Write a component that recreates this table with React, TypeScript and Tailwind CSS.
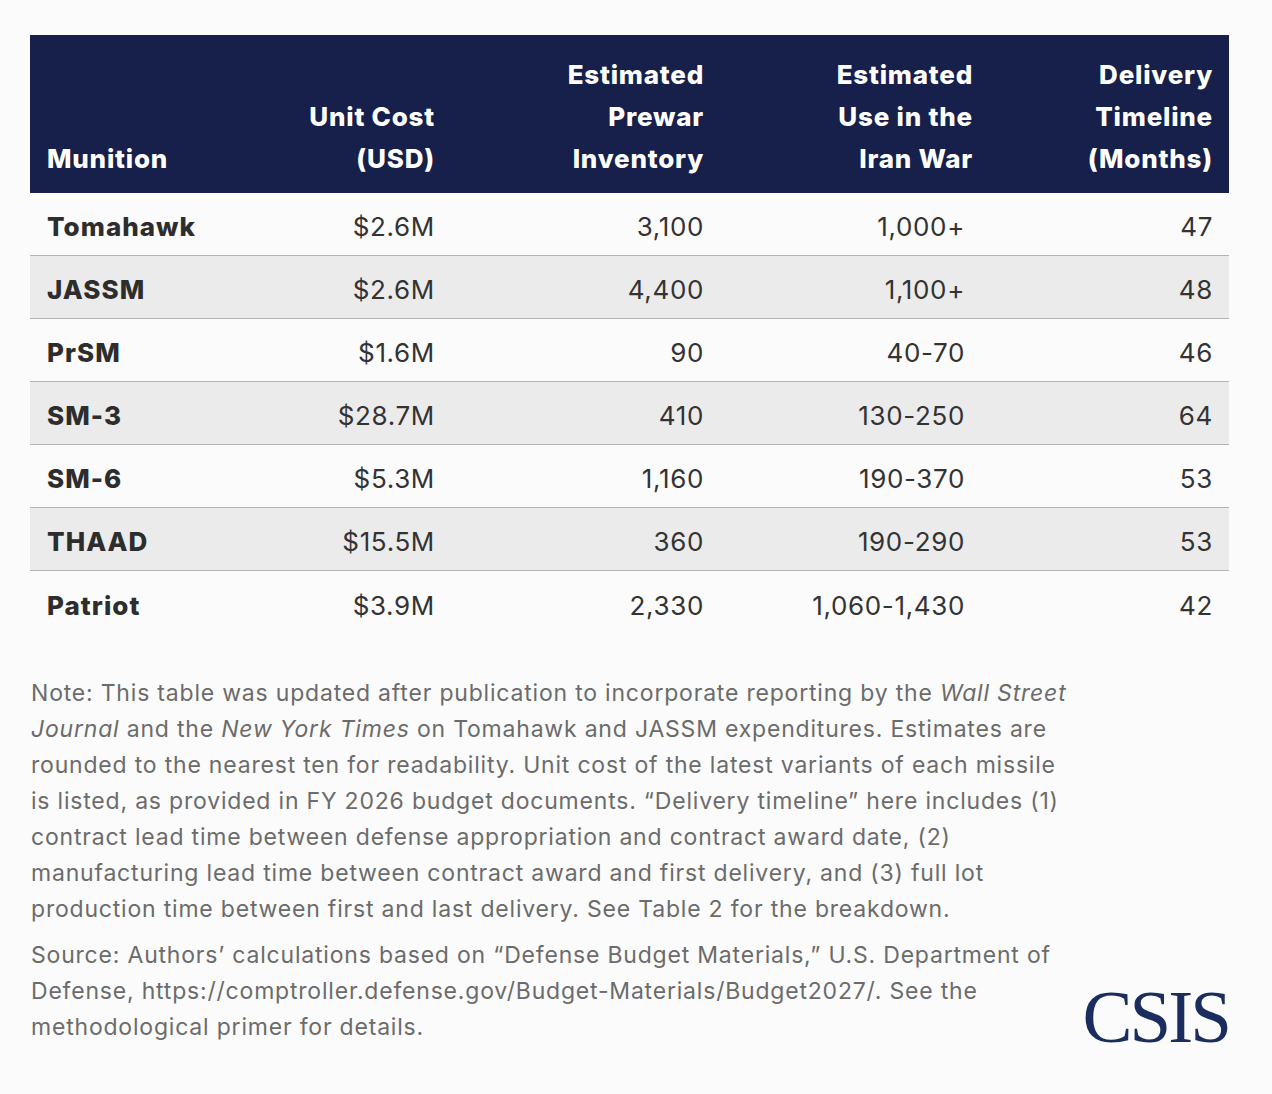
import React from "react";

const rows = [
  ["Tomahawk", "$2.6M", "3,100", "1,000+", "47"],
  ["JASSM", "$2.6M", "4,400", "1,100+", "48"],
  ["PrSM", "$1.6M", "90", "40-70", "46"],
  ["SM-3", "$28.7M", "410", "130-250", "64"],
  ["SM-6", "$5.3M", "1,160", "190-370", "53"],
  ["THAAD", "$15.5M", "360", "190-290", "53"],
  ["Patriot", "$3.9M", "2,330", "1,060-1,430", "42"],
];

export default function App() {
  return (
    <div
      className="w-[1272px] h-[1094px] bg-[#fbfbfb] pt-[35px] px-[30px]"
      style={{ fontFamily: "Inter, 'Noto Sans', sans-serif" }}
    >
      <div className="w-[1199px]">
        <div className="grid grid-cols-[230px_191px_269px_269px_240px] h-[158px] bg-[#16204a] text-white font-extrabold tracking-[0.03em] text-[26px] leading-[42px] items-end pb-[13px]">
          <div className="pl-[17px]">Munition</div>
          <div className="text-right pr-[16px]">
            Unit Cost
            <br />
            (USD)
          </div>
          <div className="text-right pr-[16px]">
            Estimated
            <br />
            Prewar
            <br />
            Inventory
          </div>
          <div className="text-right pr-[16px]">
            Estimated
            <br />
            Use in the
            <br />
            Iran War
          </div>
          <div className="text-right pr-[16px]">
            Delivery
            <br />
            Timeline
            <br />
            (Months)
          </div>
        </div>
        {rows.map((r, i) => (
          <div
            key={r[0]}
            className={`grid grid-cols-[230px_191px_269px_269px_240px] h-[63px] pt-[5px] items-center text-[26px] tracking-[0.025em] text-[#333333] ${
              i % 2 === 1 ? "bg-[#ebebeb]" : "bg-[#fbfbfb]"
            } ${i < rows.length - 1 ? "border-b border-[#b3b3b3]" : ""}`}
          >
            <div className="pl-[17px] font-extrabold tracking-[0.04em] text-[#2d2d2d]">{r[0]}</div>
            <div className="text-right pr-[16px]">{r[1]}</div>
            <div className="text-right pr-[16px]">{r[2]}</div>
            <div className="text-right pr-[24px]">{r[3]}</div>
            <div className="text-right pr-[16px]">{r[4]}</div>
          </div>
        ))}
        <div className="mt-[41px] text-[23px] tracking-[0.8px] leading-[36px] text-[#6b6b6b] pl-[1px]">
          <p className="whitespace-nowrap">
            Note: This table was updated after publication to incorporate reporting by the <i>Wall Street</i>
            <br />
            <i>Journal</i> and the <i>New York Times</i> on Tomahawk and JASSM expenditures. Estimates are
            <br />
            rounded to the nearest ten for readability. Unit cost of the latest variants of each missile
            <br />
            is listed, as provided in FY 2026 budget documents. “Delivery timeline” here includes (1)
            <br />
            contract lead time between defense appropriation and contract award date, (2)
            <br />
            manufacturing lead time between contract award and first delivery, and (3) full lot
            <br />
            production time between first and last delivery. See Table 2 for the breakdown.
          </p>
          <div className="mt-[10px] flex items-end justify-between">
            <p className="whitespace-nowrap">
              Source: Authors’ calculations based on “Defense Budget Materials,” U.S. Department of
              <br />
              Defense, https://comptroller.defense.gov/Budget-Materials/Budget2027/. See the
              <br />
              methodological primer for details.
            </p>
            <div
              className="text-[75px] leading-none text-[#1b2c5e] tracking-[-3px] mb-[-9px]"
              style={{ fontFamily: "'Liberation Serif', 'Times New Roman', serif" }}
            >
              CSIS
            </div>
          </div>
        </div>
      </div>
    </div>
  );
}
